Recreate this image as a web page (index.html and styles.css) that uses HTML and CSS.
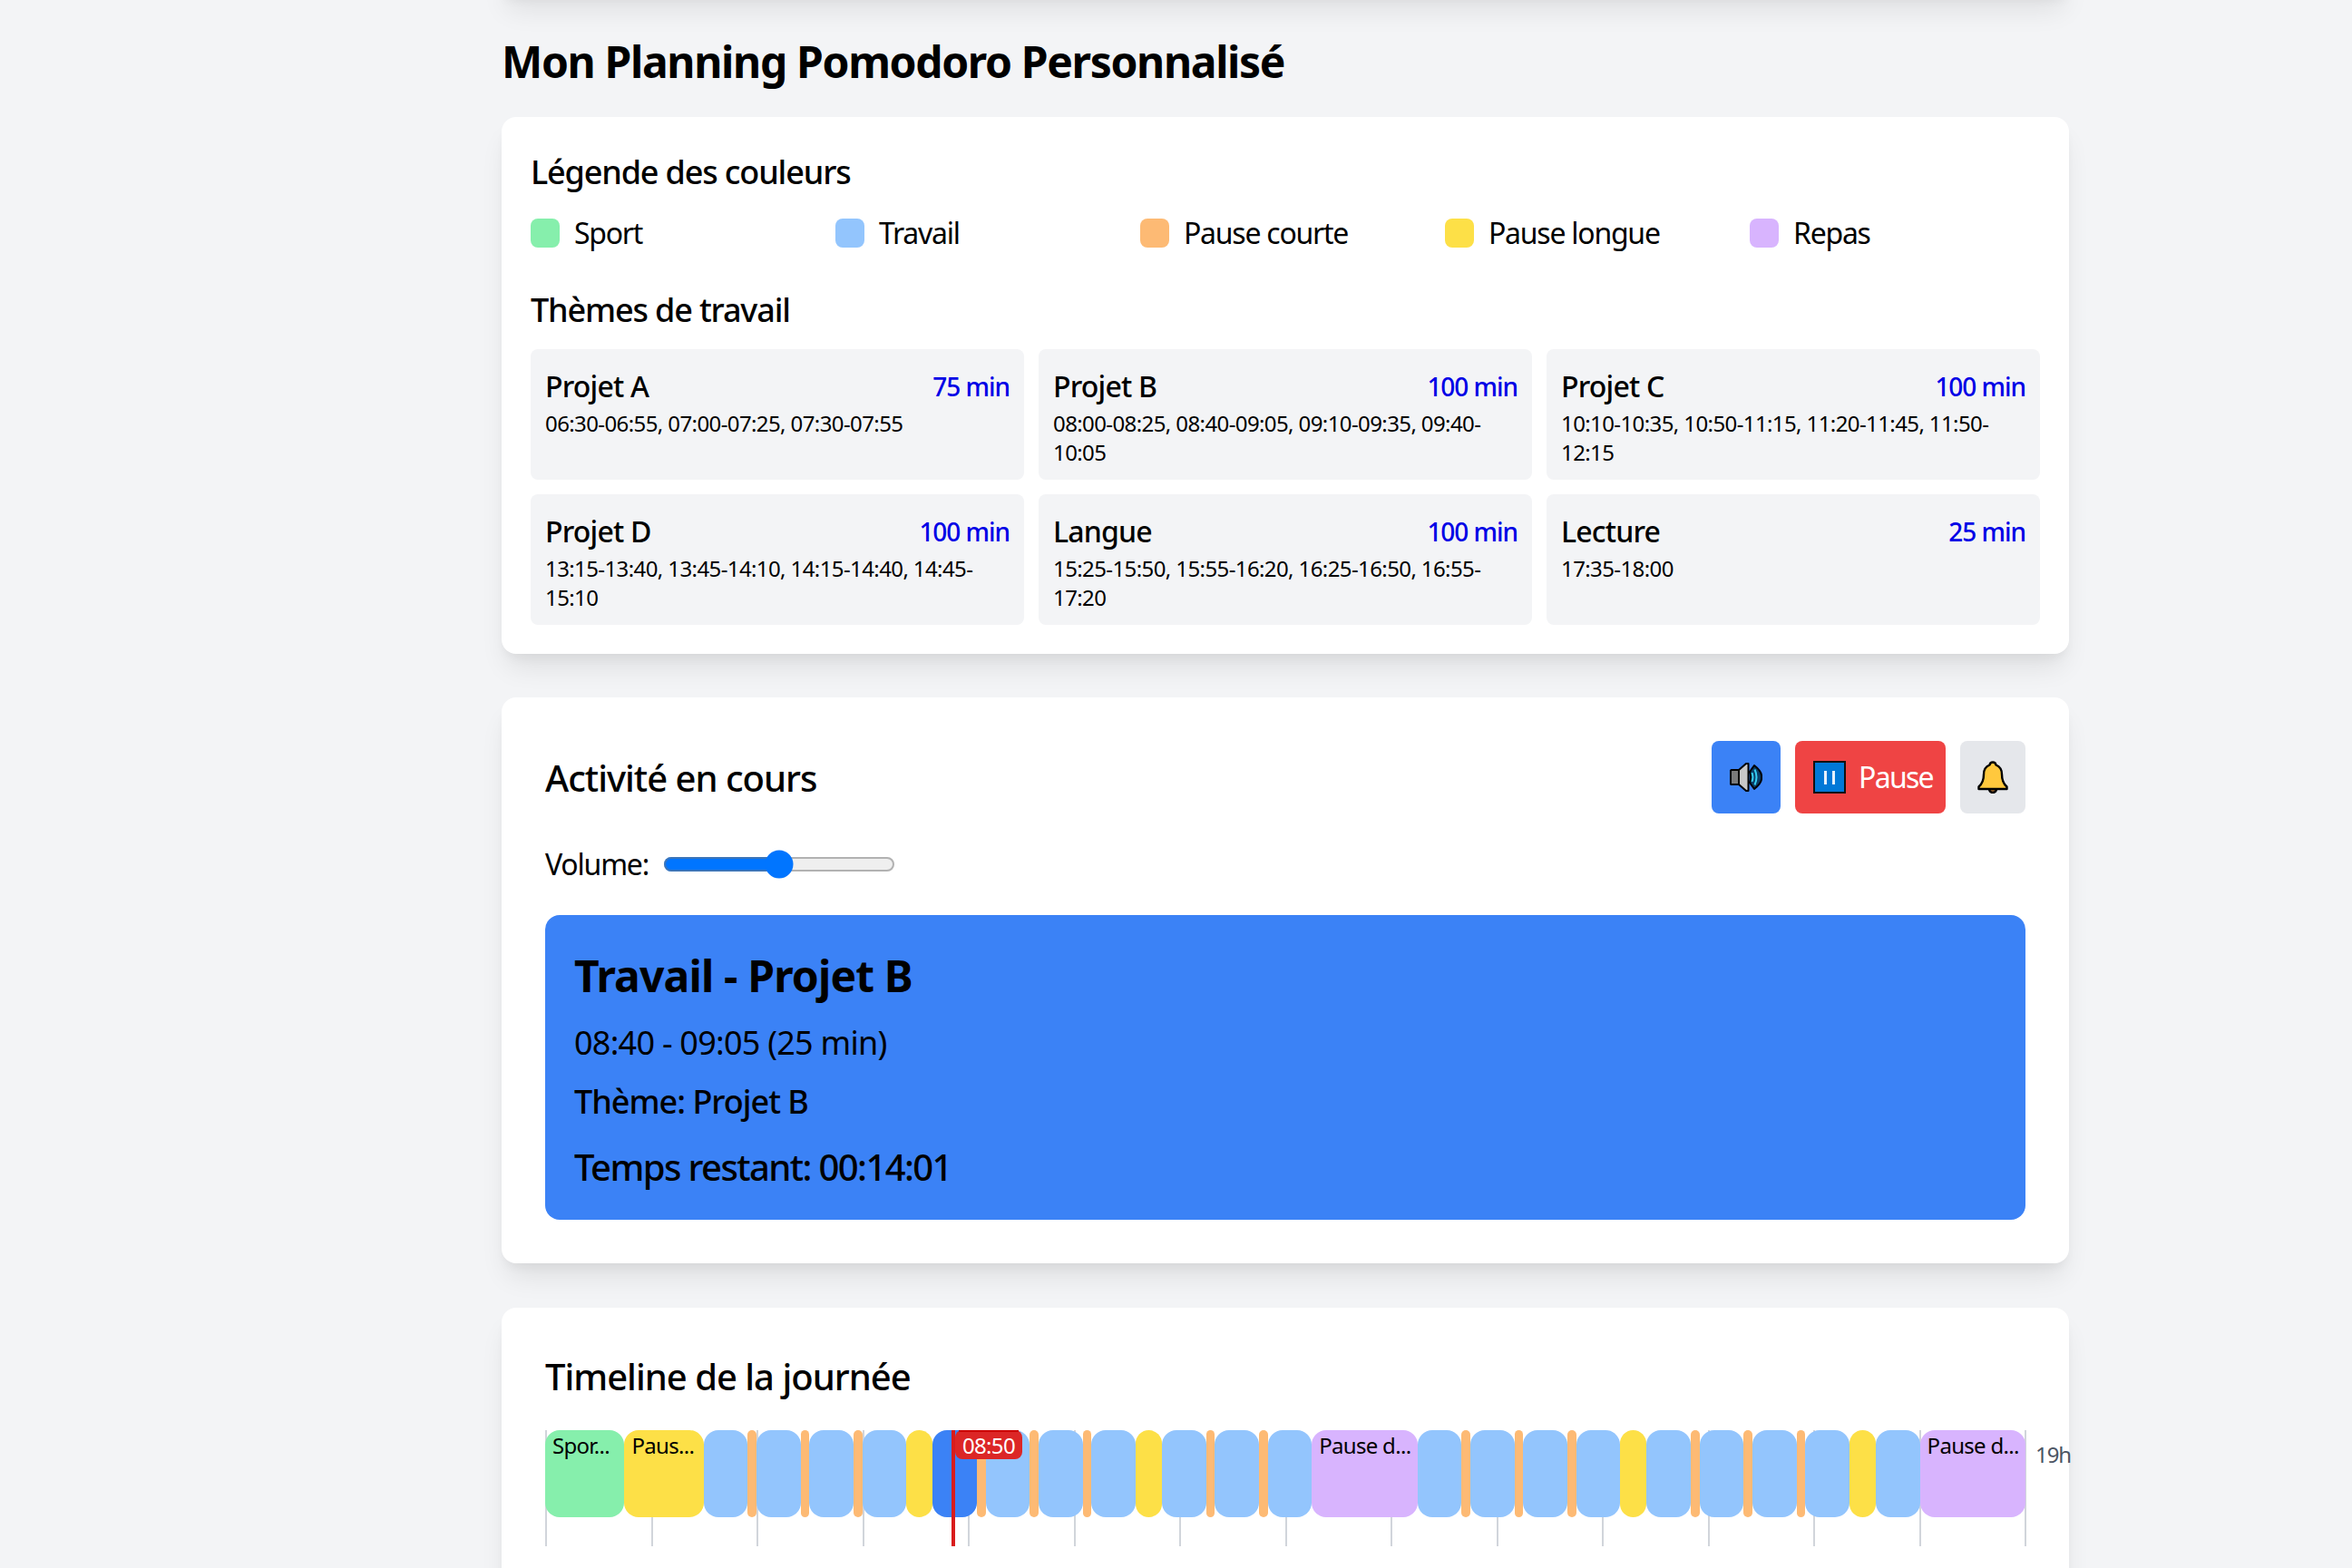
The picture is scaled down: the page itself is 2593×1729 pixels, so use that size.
FILE: index.html
```html
<!DOCTYPE html>
<html lang="fr">
<head>
<meta charset="utf-8">
<title>Mon Planning Pomodoro Personnalisé</title>
<link rel="stylesheet" href="styles.css">
</head>
<body>
<main class="page">
  <div class="prev-card"></div>
  <h1 class="page-title">Mon Planning Pomodoro Personnalisé</h1>

  <section class="card card-legend">
    <h2 class="h-sub">Légende des couleurs</h2>
    <div class="legend">
      <div class="legend-item"><span class="swatch c-sport"></span><span>Sport</span></div>
      <div class="legend-item"><span class="swatch c-work"></span><span>Travail</span></div>
      <div class="legend-item"><span class="swatch c-short"></span><span>Pause courte</span></div>
      <div class="legend-item"><span class="swatch c-long"></span><span>Pause longue</span></div>
      <div class="legend-item"><span class="swatch c-meal"></span><span>Repas</span></div>
    </div>
    <h2 class="h-sub h-themes">Thèmes de travail</h2>
    <div class="themes">
      <div class="theme"><div class="theme-head"><span class="theme-name">Projet A</span><span class="theme-min">75 min</span></div><p class="theme-times">06:30-06:55, 07:00-07:25, 07:30-07:55</p></div>
      <div class="theme"><div class="theme-head"><span class="theme-name">Projet B</span><span class="theme-min">100 min</span></div><p class="theme-times">08:00-08:25, 08:40-09:05, 09:10-09:35, 09:40-10:05</p></div>
      <div class="theme"><div class="theme-head"><span class="theme-name">Projet C</span><span class="theme-min">100 min</span></div><p class="theme-times">10:10-10:35, 10:50-11:15, 11:20-11:45, 11:50-12:15</p></div>
      <div class="theme"><div class="theme-head"><span class="theme-name">Projet D</span><span class="theme-min">100 min</span></div><p class="theme-times">13:15-13:40, 13:45-14:10, 14:15-14:40, 14:45-15:10</p></div>
      <div class="theme"><div class="theme-head"><span class="theme-name">Langue</span><span class="theme-min">100 min</span></div><p class="theme-times">15:25-15:50, 15:55-16:20, 16:25-16:50, 16:55-17:20</p></div>
      <div class="theme"><div class="theme-head"><span class="theme-name">Lecture</span><span class="theme-min">25 min</span></div><p class="theme-times">17:35-18:00</p></div>
    </div>
  </section>

  <section class="card card-now">
    <div class="now-head">
      <h2 class="h-main h-now">Activité en cours</h2>
      <div class="actions">
        <button class="btn btn-sound" aria-label="Son">
          <svg viewBox="0 0 36 32" width="36" height="32">
            <path d="M1 9.5 Q1 8 2.5 8 H10 L18 1 H20.5 V31 H18 L10 24 H2.5 Q1 24 1 22.5 Z" fill="#c8c8c8" stroke="#000" stroke-width="2" stroke-linejoin="round"/>
            <path d="M1 9.5 Q1 8 2.5 8 H10 V24 H2.5 Q1 24 1 22.5 Z" fill="#7a7a7a" stroke="#000" stroke-width="2" stroke-linejoin="round"/>
            <path d="M27 3 Q36 10 35 16 Q36 22 27 29 L22 22 Q24 16 22 10 Z" fill="#0a3d66" stroke="#000" stroke-width="2" stroke-linejoin="round"/>
            <path d="M24.5 11 Q26.5 16 24.5 21" fill="none" stroke="#36cdf0" stroke-width="2"/>
            <path d="M27.5 7.5 Q31.5 16 27.5 24.5" fill="none" stroke="#36cdf0" stroke-width="2"/>
          </svg>
        </button>
        <button class="btn btn-pause">
          <svg viewBox="0 0 36 36" width="36" height="36">
            <rect x="1" y="1" width="34" height="34" fill="#0078d7" stroke="#111" stroke-width="2"/>
            <rect x="12" y="11" width="3" height="15" fill="#e6f1fb"/>
            <rect x="21" y="11" width="3" height="15" fill="#e6f1fb"/>
          </svg>
          <span>Pause</span>
        </button>
        <button class="btn btn-bell" aria-label="Notifications">
          <svg viewBox="0 0 34 36" width="34" height="36">
            <path d="M12.5 30 H21.5 Q20.5 35 17 35 Q13.5 35 12.5 30 Z" fill="#a5682a" stroke="#000" stroke-width="2.4" stroke-linejoin="round"/>
            <path d="M17 1.5 Q20 1.5 20.5 4.5 Q27 7 27 15 Q27 24 32.5 28.5 V31 H1.5 V28.5 Q7 24 7 15 Q7 7 13.5 4.5 Q14 1.5 17 1.5 Z" fill="#ffc83d" stroke="#000" stroke-width="2.4" stroke-linejoin="round"/>
          </svg>
        </button>
      </div>
    </div>
    <div class="volume">
      <label class="volume-label" for="vol">Volume:</label>
      <input class="volume-range" id="vol" type="range" min="0" max="100" value="50">
    </div>
    <div class="activity">
      <h3 class="activity-title">Travail - Projet B</h3>
      <p class="activity-time">08:40 - 09:05 (25 min)</p>
      <p class="activity-theme">Thème: Projet B</p>
      <p class="activity-left">Temps restant: 00:14:01</p>
    </div>
  </section>

  <section class="card card-timeline">
    <h2 class="h-main">Timeline de la journée</h2>
    <div class="timeline">
      <div class="ticks">
        <i></i><i></i><i></i><i></i><i></i><i></i><i></i><i></i><i></i><i></i><i></i><i></i><i></i><i></i>
      </div>
      <span class="end-hour">19h</span>
      <div class="blocks">
        <div class="block c-sport" style="flex-grow:45"><span>Spor...</span></div>
        <div class="block c-long" style="flex-grow:45"><span>Paus...</span></div>
        <div class="block c-work" style="flex-grow:25"></div><div class="block c-short" style="flex-grow:5"></div>
        <div class="block c-work" style="flex-grow:25"></div><div class="block c-short" style="flex-grow:5"></div>
        <div class="block c-work" style="flex-grow:25"></div><div class="block c-short" style="flex-grow:5"></div>
        <div class="block c-work" style="flex-grow:25"></div><div class="block c-long" style="flex-grow:15"></div>
        <div class="block c-active" style="flex-grow:25"></div><div class="block c-short" style="flex-grow:5"></div>
        <div class="block c-work" style="flex-grow:25"></div><div class="block c-short" style="flex-grow:5"></div>
        <div class="block c-work" style="flex-grow:25"></div><div class="block c-short" style="flex-grow:5"></div>
        <div class="block c-work" style="flex-grow:25"></div><div class="block c-long" style="flex-grow:15"></div>
        <div class="block c-work" style="flex-grow:25"></div><div class="block c-short" style="flex-grow:5"></div>
        <div class="block c-work" style="flex-grow:25"></div><div class="block c-short" style="flex-grow:5"></div>
        <div class="block c-work" style="flex-grow:25"></div>
        <div class="block c-meal" style="flex-grow:60"><span>Pause d...</span></div>
        <div class="block c-work" style="flex-grow:25"></div><div class="block c-short" style="flex-grow:5"></div>
        <div class="block c-work" style="flex-grow:25"></div><div class="block c-short" style="flex-grow:5"></div>
        <div class="block c-work" style="flex-grow:25"></div><div class="block c-short" style="flex-grow:5"></div>
        <div class="block c-work" style="flex-grow:25"></div><div class="block c-long" style="flex-grow:15"></div>
        <div class="block c-work" style="flex-grow:25"></div><div class="block c-short" style="flex-grow:5"></div>
        <div class="block c-work" style="flex-grow:25"></div><div class="block c-short" style="flex-grow:5"></div>
        <div class="block c-work" style="flex-grow:25"></div><div class="block c-short" style="flex-grow:5"></div>
        <div class="block c-work" style="flex-grow:25"></div><div class="block c-long" style="flex-grow:15"></div>
        <div class="block c-work" style="flex-grow:25"></div>
        <div class="block c-meal" style="flex-grow:60"><span>Pause d...</span></div>
      </div>
      <div class="now-line"><span class="now-label">08:50</span></div>
    </div>
  </section>
</main>
</body>
</html>
```
FILE: styles.css
```css
* { box-sizing: border-box; }
html, body { margin: 0; padding: 0; height: 100vh; overflow: hidden; }
body {
  background: #f3f4f6;
  color: #000;
  font-family: "Noto Sans", "Open Sans", sans-serif;
  font-size: 32px;
  line-height: 48px;
}
.page { width: 1728px; margin-left: 553px; }
.prev-card {
  height: 40px;
  margin-top: -44px;
  background: #fff;
  box-shadow: 0 20px 30px -6px rgba(0,0,0,.09), 0 8px 12px -4px rgba(0,0,0,.05);
}
.page-title {
  margin: 39px 0 29px;
  font-size: 48px;
  line-height: 65px;
  font-weight: 700;
  letter-spacing: -1.35px;
}
.card {
  background: #fff;
  border-radius: 16px;
  box-shadow: 0 20px 30px -6px rgba(0,0,0,.09), 0 8px 12px -4px rgba(0,0,0,.05);
}
.card-legend { padding: 32px; margin-bottom: 48px; }
.h-sub {
  margin: 0 0 14px;
  font-size: 36px;
  line-height: 58px;
  font-weight: 500;
  letter-spacing: -1.15px;
}
.h-themes { margin-top: 32px; }
.legend { display: grid; grid-template-columns: repeat(5, 1fr); gap: 16px; }
.legend-item { display: flex; align-items: center; gap: 16px; letter-spacing: -1.25px; }
.swatch { width: 32px; height: 32px; border-radius: 8px; flex: none; }
.c-sport { background: #86efac; }
.c-work { background: #93c5fd; }
.c-short { background: #fdba74; }
.c-long { background: #fde047; }
.c-meal { background: #d8b4fe; }
.c-active { background: #3b82f6; }
.themes { display: grid; grid-template-columns: repeat(3, 1fr); gap: 16px; }
.theme { background: #f3f4f6; border-radius: 8px; padding: 16px; height: 144px; }
.theme-head { display: flex; justify-content: space-between; align-items: center; height: 50px; }
.theme-name { font-weight: 500; letter-spacing: -.8px; }
.theme-min { font-size: 28px; color: #0000e6; font-weight: 500; letter-spacing: -1.05px; }
.theme-times { margin: 0; font-size: 24px; line-height: 32px; letter-spacing: -.6px; }

.card-now { padding: 48px; margin-bottom: 49px; }
.now-head { display: flex; justify-content: space-between; align-items: center; height: 80px; margin-bottom: 32px; }
.h-main { margin: 0; font-size: 40px; line-height: 56px; font-weight: 500; letter-spacing: -1px; }
.h-now { padding-top: 2px; }
.actions { display: flex; gap: 16px; }
.btn {
  display: flex; align-items: center; justify-content: center; gap: 14px;
  height: 80px; border: 0; border-radius: 8px; padding: 0;
  font: inherit; letter-spacing: -1.7px; color: #fff;
}
.btn-sound { width: 76px; background: #3b82f6; }
.btn-pause { width: 166px; background: #ef4444; justify-content: flex-start; padding-left: 20px; }
.btn-bell { width: 72px; background: #e5e7eb; }
.volume { display: flex; align-items: center; gap: 12px; height: 48px; margin-bottom: 32px; }
.volume-label { letter-spacing: -1.2px; }
.volume-range { zoom: 2; width: 128px; }
.activity { border-radius: 16px; background: #3b82f6; padding: 32px 32px 30px; }
.activity-title { margin: 0 0 11px; font-size: 48px; line-height: 70px; font-weight: 700; letter-spacing: -.85px; }
.activity-time { margin: 0 0 13px; font-size: 36px; line-height: 56px; letter-spacing: -.75px; }
.activity-theme { margin: 0 0 20px; line-height: 48px; font-size: 36px; font-weight: 500; letter-spacing: -1px; }
.activity-left { margin: 0; font-size: 40px; line-height: 56px; font-weight: 550; letter-spacing: -1.6px; }

.card-timeline { height: 500px; padding: 48px; }
.card-timeline .h-main { margin-bottom: 31px; }
.timeline { position: relative; height: 128px; }
.blocks { position: relative; display: flex; height: 96px; }
.block { flex: 0 0 0; min-width: 0; border-radius: 16px; overflow: hidden; font-size: 24px; line-height: 32px; letter-spacing: -.7px; white-space: nowrap; }
.block span { display: block; padding: 1px 8px; }
.ticks { position: absolute; inset: 0 -1px 0 0; display: flex; border-right: 2px solid #d1d5db; }
.ticks i { flex: 1; border-left: 2px solid #d1d5db; }
.end-hour { position: absolute; left: 100%; top: 11px; margin-left: 11px; font-size: 24px; line-height: 32px; color: #4b5563; letter-spacing: -1.1px; }
.now-line { position: absolute; top: 0; bottom: 0; left: 448px; width: 4px; background: #d91c1c; }
.now-label {
  position: absolute; top: 0; left: 4px; width: 74px; height: 32px;
  background: #dc2626; color: #fff; border-radius: 8px;
  font-size: 24px; line-height: 33px; text-align: center; letter-spacing: -.7px;
}
.now-label::before {
  content: ""; position: absolute; top: 0; left: 4px; right: 4px; height: 2px; background: #cc0000;
}
```
